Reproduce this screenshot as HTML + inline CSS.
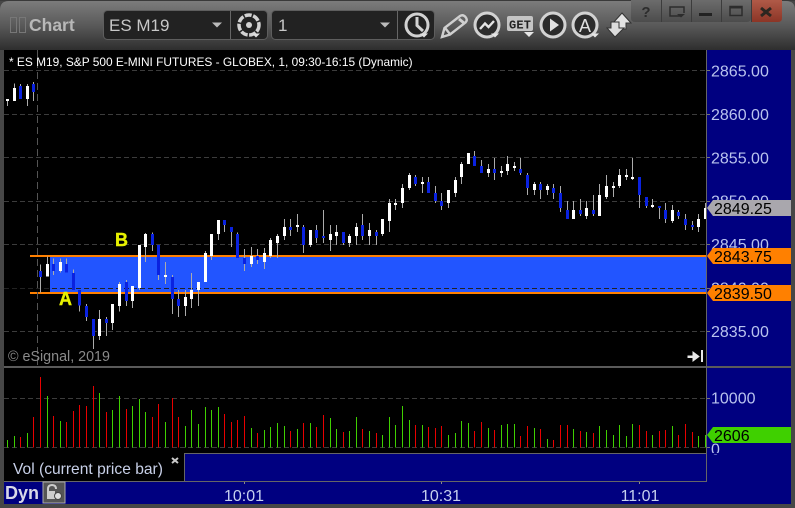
<!DOCTYPE html>
<html><head><meta charset="utf-8"><style>
html,body{margin:0;padding:0;background:#5a5a5a;width:795px;height:508px;overflow:hidden}
svg{display:block}
text{font-family:"Liberation Sans",Arial,sans-serif}
.p{font-size:16px;fill:#b9c3ee}
.t{font-size:16px;fill:#000}
.w{stroke:#ababab;stroke-width:3;fill:none}
.bb{stroke:#0a22e0;stroke-width:9;fill:none}
.bw{stroke:#fff;stroke-width:9;fill:none}
.vg{stroke:#3fd000;stroke-width:3;fill:none}
.vr{stroke:#e80000;stroke-width:3;fill:none}
.ic{fill:none;stroke:#d2d2d2;stroke-width:3}
</style></head><body>
<svg width="795" height="508" viewBox="0 0 795 508" xmlns="http://www.w3.org/2000/svg">
<defs>
<linearGradient id="tb" x1="0" y1="0" x2="0" y2="1"><stop offset="0" stop-color="#7c7c7c"/><stop offset=".5" stop-color="#595959"/><stop offset="1" stop-color="#2e2e2e"/></linearGradient>
<linearGradient id="wb" x1="0" y1="0" x2="0" y2="1"><stop offset="0" stop-color="#6c6c6c"/><stop offset="1" stop-color="#4c4c4c"/></linearGradient>
<linearGradient id="cl" x1="0" y1="0" x2="0" y2="1"><stop offset="0" stop-color="#b05a48"/><stop offset="1" stop-color="#8c3526"/></linearGradient>
<clipPath id="cc"><rect x="4" y="50" width="702" height="316"/></clipPath>
</defs>
<rect width="795" height="508" fill="#474747"/>
<path d="M0 50V10Q0 1 9 1H786Q795 1 795 10V50Z" fill="url(#tb)"/>
<rect x="0" y="0" width="795" height="1" fill="#3a3a3a"/>

<!-- title -->
<rect x="10.500" y="17.500" width="6" height="15" fill="none" stroke="#777"/>
<rect x="19.500" y="17.500" width="6" height="15" fill="none" stroke="#777"/>
<text x="29" y="31" font-size="17.500" font-weight="bold" fill="#b8b8b8">Chart</text>

<!-- combo 1 -->
<rect x="103.500" y="10.500" width="164" height="29" rx="4" fill="#222" stroke="#5e5e5e"/>
<path d="M230.500 11V39" stroke="#666"/>
<text x="109" y="31" font-size="17" fill="#c8c8c8">ES M19</text>
<path d="M212 22.500h10l-5 5z" fill="#bbb"/>
<circle cx="249" cy="25" r="10" fill="none" stroke="#d2d2d2" stroke-width="3.500" stroke-dasharray="7 1.500"/>
<circle cx="249" cy="25" r="3" fill="#d2d2d2"/>
<path d="M252 33.500h8l-4 4z" fill="#e0e0e0"/>

<!-- combo 2 -->
<rect x="271.500" y="10.500" width="163" height="29" rx="4" fill="#222" stroke="#5e5e5e"/>
<path d="M397.500 11V39" stroke="#666"/>
<text x="278" y="31" font-size="17" fill="#c8c8c8">1</text>
<path d="M380 22.500h10l-5 5z" fill="#bbb"/>
<circle cx="417" cy="25" r="11" class="ic"/>
<path d="M417 17V25.500L423 31" class="ic"/>
<path d="M420 33.500h8l-4 4z" fill="#e0e0e0"/>

<!-- toolbar icons -->
<path d="M442 37L444.500 28L460 16Q463 14 465.500 17Q468 20 465.500 22.500L450 34.500Z M445.500 28.500L449.500 33.500" fill="none" stroke="#cfcfcf" stroke-width="2.400"/>
<path d="M459 19L464 23" stroke="#cfcfcf" stroke-width="3"/>
<circle cx="487" cy="25" r="12" fill="#2c2c2c" stroke="#d2d2d2" stroke-width="3"/>
<path d="M480 29L485 23.500L488.500 27L494 21" fill="none" stroke="#e4e4e4" stroke-width="2.400"/>
<path d="M491 33.500h8l-4 4z" fill="#e6e6e6"/>
<rect x="507" y="16" width="26" height="15" rx="2" fill="#c4c4c4"/>
<text x="520" y="28.500" font-size="12" font-weight="bold" text-anchor="middle" fill="#222" style="font-family:'Liberation Mono',monospace" textLength="22">GET</text>
<path d="M524 32h10l-5 5z" fill="#e6e6e6"/>
<circle cx="553" cy="25" r="12" fill="#2c2c2c" stroke="#d2d2d2" stroke-width="3"/>
<path d="M550 18.500L559 25L550 31.500Z" fill="#e0e0e0"/>
<circle cx="585" cy="25" r="12" fill="#2c2c2c" stroke="#d2d2d2" stroke-width="3"/>
<text x="585" y="32" font-size="18" text-anchor="middle" fill="#e0e0e0">A</text>
<path d="M591 33.500h8l-4 4z" fill="#e6e6e6"/>
<path d="M622 13L631 23H626V29H618V23H613Z" fill="#e2e2e2" stroke="#333"/>
<path d="M615 37L607 28H611V22H619V28H624Z" fill="#dcdcdc" stroke="#333"/>

<!-- window buttons -->
<path d="M631 0H751V18Q751 22 747 22H635Q631 22 631 18Z" fill="url(#wb)"/>
<path d="M751 0H782V18Q782 22 778 22H751Z" fill="url(#cl)"/>
<path d="M661.500 0V22M691.500 0V22M721.500 0V22M751.500 0V22" stroke="#3c3c3c"/>
<text x="646" y="17" font-size="15" font-weight="bold" text-anchor="middle" fill="#2c2c2c">?</text>
<path d="M682 16H670V7H684V13" fill="none" stroke="#2c2c2c" stroke-width="1.500"/>
<path d="M677 14h8l-4 3.500z" fill="#2c2c2c"/>
<rect x="699" y="13" width="13" height="3" fill="#222"/>
<rect x="730" y="6.500" width="12" height="9" fill="none" stroke="#2c2c2c" stroke-width="1.500"/>
<rect x="730" y="6" width="12" height="2.500" fill="#2c2c2c"/>
<path d="M761 8L771 16M771 8L761 16" stroke="#2c2620" stroke-width="3"/>

<!-- main black area -->
<rect x="4" y="50" width="787" height="454" fill="#000"/>
<rect x="706" y="50" width="85" height="454" fill="#000080"/>
<rect x="184" y="453" width="607" height="51" fill="#000080"/>
<rect x="4" y="482" width="787" height="22" fill="#000080"/>

<!-- axis text beneath tags -->
<g class="p">
<text class="p" x="711" y="76.500">2865.00</text>
<text class="p" x="711" y="120">2860.00</text>
<text class="p" x="711" y="163.500">2855.00</text>
<text class="p" x="711" y="206.500">2850.00</text>
<text class="p" x="711" y="250">2845.00</text>
<text class="p" x="711" y="293.500">2840.00</text>
<text class="p" x="711" y="337">2835.00</text>
<text class="p" x="711" y="403.500">10000</text>
<text class="p" x="711" y="454.500">0</text>
</g>
<rect x="706" y="453" width="85" height="1" fill="#000080"/>

<!-- band -->
<rect x="50" y="257" width="656" height="35" fill="#2255ff"/>
<rect x="30" y="255" width="676" height="2" fill="#ff8000"/>
<rect x="30" y="292" width="676" height="2" fill="#ff8000"/>

<!-- grid -->
<g stroke="#3c3c3c" stroke-dasharray="5 3" fill="none" shape-rendering="crispEdges">
<path d="M4 70.500H706M4 114.500H706M4 157.500H706M4 201.500H706M4 244.500H706M4 331.500H706M4 398.500H706M4 447.500H706"/>
<path d="M37.500 50V366" stroke="#555" stroke-dasharray="7 4"/>
</g>
<path d="M4 288.500H706" stroke="#222" stroke-dasharray="5 3" shape-rendering="crispEdges"/>
<path d="M706 70.500h4M706 114.500h4M706 157.500h4M706 201.500h4M706 244.500h4M706 288.500h4M706 331.500h4M706 398.500h4M706 447.500h4" stroke="#777"/>

<!-- candles -->
<g clip-path="url(#cc)" shape-rendering="crispEdges">
<g transform="translate(0,50) scale(.33333)">
<path class="w" d="M22 147V168M43 100V153M61 102V147M82 102V168M100 96V153"/>
<path class="bw" d="M22 147V153M43 114V153M82 108V147"/>
<path class="bb" d="M61 108V147M100 102V126"/>
</g>
<g transform="translate(0,220) scale(.33333)">
<path class="w" d="M121 133V218M142 110V170M160 115V165M181 115V158M199 115V158M220 148V210M238 210V275M259 252V303M280 297V387M298 270V360M319 291V348M337 252V330M358 186V275M379 180V258M397 198V264M418 75V210M436 39V126M457 37V93M475 75V180M496 126V192M517 165V282M535 210V291M556 210V288M574 159V264M595 186V258M616 93V186M634 42V120M655 0V60M673 0V36M694 21V81M712 37V114M733 87V153M754 81V141M772 87V132M793 84V147"/>
<path class="bw" d="M142 132V170M181 126V153M298 297V348M337 252V309M358 192V258M397 198V243M418 75V204M436 42V81M496 165V171M556 231V258M574 210V237M595 186V210M616 99V186M634 42V108M655 0V42M754 108V132M793 99V126"/>
<path class="bb" d="M121 153V171M160 132V153M199 132V158M220 159V210M238 210V257M259 258V291M280 297V348M319 297V309M379 186V243M457 42V75M475 75V165M517 171V237M535 237V258M673 0V15M694 21V36M712 42V114M733 114V132M772 108V120"/>
</g>
<g transform="translate(260,140) scale(.33333)">
<path class="w" d="M31 294V354M52 282V354M73 237V300M91 237V288M112 222V276M130 255V339M151 270V321M169 255V309M190 210V309M211 255V333M229 255V315M250 276V315M268 282V321M289 249V315M307 222V300M328 249V315M349 270V315M367 237V288M388 177V276M406 177V210M427 132V204M448 99V150M466 105V138M487 111V159M505 111V159M526 138V189M544 159V210M565 150V204M586 111V171M604 66V132M625 39V72M643 33V78M664 60V99M685 72V111M703 54V120M724 78V111M742 48V105M763 66V93M781 54V105M802 99V165"/>
<path class="bw" d="M31 300V348M52 288V309M73 261V288M112 255V261M151 270V315M211 282V300M229 276V288M268 288V309M289 261V288M328 270V288M367 237V282M388 189V243M406 189V195M427 144V189M448 105V144M487 126V132M565 150V189M586 120V159M604 72V111M625 39V72M685 87V99M724 93V99M742 72V93M763 78V84"/>
<path class="bb" d="M91 261V270M130 261V315M169 270V294M190 288V294M250 276V309M307 255V288M349 276V288M466 111V132M505 126V159M526 159V183M544 183V198M643 48V78M664 78V99M703 87V99M781 87V99M802 105V144"/>
</g>
<g transform="translate(525,140) scale(.33333)">
<path class="w" d="M28 126V165M46 126V177M67 132V165M85 132V177M106 138V216M127 183V237M145 183V237M166 177V228M184 183V237M205 165V228M223 132V228M244 105V177M265 126V171M283 87V144M304 87V120M322 54V120M343 111V204M364 171V204M382 177V204M403 198V237M421 189V249M442 195V249M460 210V237M481 222V270M502 243V270M520 222V276M541 189V237"/>
<path class="bw" d="M28 132V150M67 138V150M145 210V237M184 204V228M223 165V228M244 138V171M265 138V144M283 105V138M304 105V111M322 111V117M382 195V201M442 210V243M520 237V261M541 204V237"/>
<path class="bb" d="M46 132V150M85 144V159M106 159V204M127 210V237M166 210V222M205 210V222M343 111V165M364 171V198M403 198V204M421 210V237M460 216V228M481 237V255M502 255V261"/>
</g>
</g>

<!-- volume -->
<g shape-rendering="crispEdges">
<g transform="translate(0,365) scale(.33333)">
<path class="vg" d="M22 225V247M43 213V247M82 204V247M142 93V247M181 168V247M298 84V247M337 135V247M358 93V247M397 123V247M418 102V247M436 141V247M496 171V247M556 183V247M574 135V247M595 177V247M616 126V247M634 135V247M655 126V247M754 189V247M793 195V247"/>
<path class="vr" d="M61 216V247M100 156V247M121 36V247M160 153V247M199 171V247M220 138V247M238 120V247M259 123V247M280 63V247M319 141V247M379 132V247M457 156V247M475 117V247M517 99V247M535 156V247M673 147V247M694 171V247M712 165V247M733 153V247M772 204V247"/>
</g>
<g transform="translate(265,365) scale(.33333)">
<path class="vg" d="M16 186V247M37 174V247M58 183V247M97 192V247M136 174V247M196 159V247M214 192V247M253 198V247M274 156V247M313 198V247M352 210V247M373 156V247M391 180V247M412 123V247M433 165V247M472 180V247M550 210V247M571 204V247M589 168V247M610 174V247M670 189V247M709 180V247M727 177V247M748 177V247"/>
<path class="vr" d="M76 198V247M115 174V247M154 186V247M175 150V247M235 201V247M292 192V247M334 204V247M451 180V247M490 186V247M511 189V247M529 183V247M628 198V247M649 171V247M688 195V247M766 213V247M787 183V247"/>
</g>
<g transform="translate(530,365) scale(.33333)">
<path class="vg" d="M13 189V247M52 222V247M130 192V247M169 201V247M208 183V247M229 195V247M250 210V247M268 180V247M289 213V247M307 177V247M367 210V247M427 183V247M505 213V247M526 210V247"/>
<path class="vr" d="M31 192V247M70 225V247M91 180V247M112 180V247M151 198V247M190 204V247M328 180V247M349 198V247M388 198V247M406 195V247M445 210V247M466 177V247M487 201V247"/>
</g>
</g>

<!-- panel lines -->
<rect x="4" y="366" width="787" height="2" fill="#5a5a5a"/>
<rect x="184" y="453" width="523" height="1" fill="#666"/>
<rect x="184" y="453" width="1" height="29" fill="#666"/>
<rect x="4" y="481" width="703" height="1" fill="#666"/>
<rect x="706" y="50" width="1" height="432" fill="#666"/>

<!-- tags -->
<path d="M707 208L713 200H791V216H713Z" fill="#a9a7ad"/>
<text class="t" x="714" y="214" fill="#111">2849.25</text>
<path d="M707 256L713 248H791V264H713Z" fill="#ff8000"/>
<text class="t" x="714" y="262">2843.75</text>
<path d="M707 293L713 285H791V301H713Z" fill="#ff8000"/>
<text class="t" x="714" y="299">2839.50</text>
<path d="M707 435L713 427H791V443H713Z" fill="#3fd000"/>
<text class="t" x="714" y="441">2606</text>

<!-- labels -->
<text x="9" y="66" font-size="11.900" fill="#fff">* ES M19, S&amp;P 500 E-MINI FUTURES - GLOBEX, 1, 09:30-16:15 (Dynamic)</text>
<text x="115" y="246" font-size="18" font-weight="bold" fill="#e6f000" stroke="#e6f000" stroke-width=".4">B</text>
<text x="59" y="305" font-size="18" font-weight="bold" fill="#e6f000" stroke="#e6f000" stroke-width=".4">A</text>
<text x="8" y="361" font-size="14.300" fill="#8a8a8a">© eSignal, 2019</text>
<path d="M688 356H693V352L699 356.500L693 361V357.500H688Z" fill="#e8e8e8" stroke="#e8e8e8"/>
<rect x="701" y="350" width="2" height="12" fill="#e8e8e8"/>
<text x="13" y="474" font-size="15.600" fill="#c8d0e8">Vol (current price bar)</text>
<path d="M172 458L178 463M178 458L172 463" stroke="#c8c8c8" stroke-width="2"/>
<text x="5" y="499" font-size="18" font-weight="bold" fill="#d8d8e8">Dyn</text>
<rect x="43" y="482" width="22" height="21" fill="#555" stroke="#aaa"/>
<path d="M48 498V489Q48 485 52 485Q56 485 56 489" fill="none" stroke="#ccc" stroke-width="2"/>
<rect x="47" y="491" width="8" height="8" fill="#ccc"/>
<circle cx="58" cy="496" r="3.500" fill="#ddd" stroke="#444"/>
<text x="244" y="501" font-size="16" text-anchor="middle" fill="#c6d0ee">10:01</text>
<text x="441" y="501" font-size="16" text-anchor="middle" fill="#c6d0ee">10:31</text>
<text x="640" y="501" font-size="16" text-anchor="middle" fill="#c6d0ee">11:01</text>
<path d="M244.500 482v2M441.500 482v2M639.500 482v2" stroke="#888"/>
</svg>
</body></html>
